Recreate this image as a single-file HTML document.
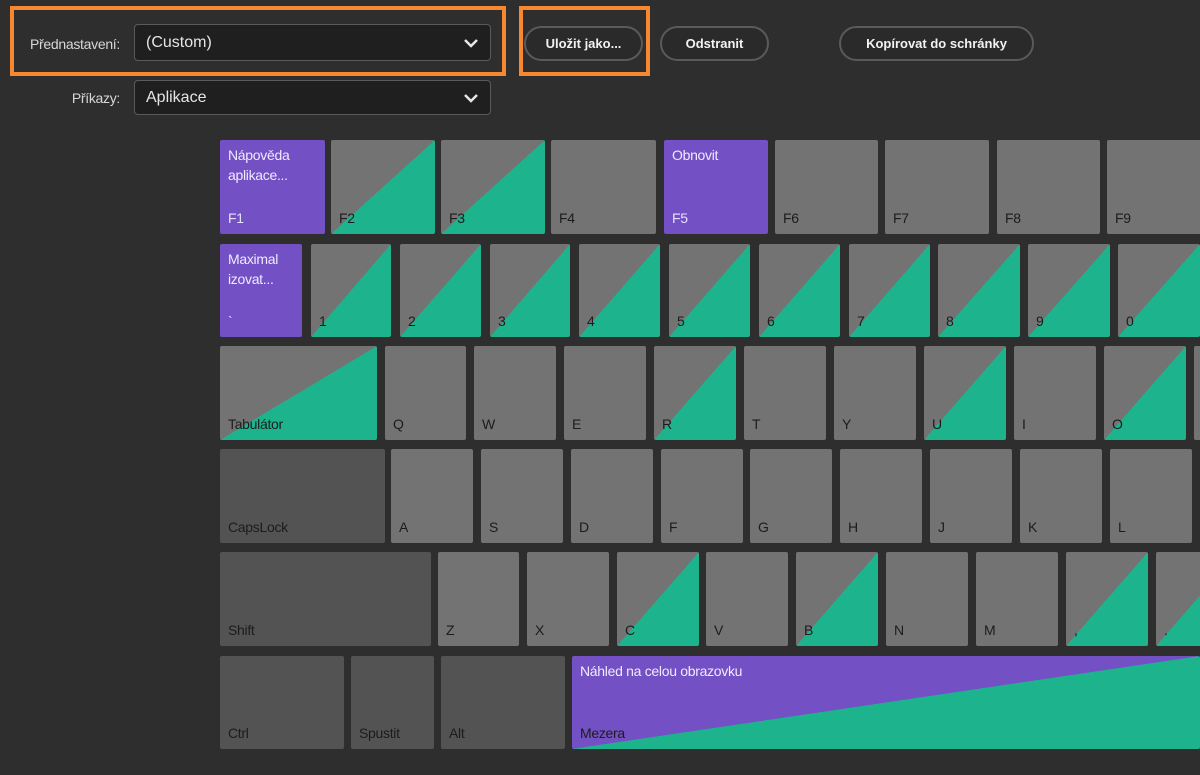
<!DOCTYPE html>
<html><head><meta charset="utf-8"><style>
body{margin:0;width:1200px;height:775px;background:#2e2e2e;overflow:hidden;position:relative;font-family:"Liberation Sans",sans-serif;}
.k{position:absolute;background:#737373;border-radius:2px;box-sizing:border-box;color:#1c1c1c;font-size:14px;letter-spacing:-0.3px;}
.k .b{position:absolute;left:8px;bottom:8px;}
.k .t{position:absolute;left:8px;top:5px;line-height:20px;color:#f0eaff;}
.s{background:linear-gradient(to bottom right,#737373 50%,#1db38d 50%);}
.p{background:#7350c4;}
.p .b{color:#e8e0ff}
.d{background:#535353;}
.or{position:absolute;border:4px solid #f7882f;box-sizing:border-box;}
.dd{position:absolute;left:134px;width:357px;background:#1f1f1f;border:1px solid #5a5a5a;border-radius:4px;box-sizing:border-box;color:#e6e6e6;font-size:16px;padding-left:11px;}
.lb{position:absolute;color:#d8d8d8;font-size:14px;text-align:right;width:120px;left:0;letter-spacing:-0.3px}
.bt{position:absolute;top:26px;height:35px;border:2px solid #5a5a5a;border-radius:18px;box-sizing:border-box;color:#f2f2f2;font-weight:bold;font-size:13px;text-align:center;line-height:31px;background:#2a2a2a;}
.chev{position:absolute;right:12px;top:50%;margin-top:-5px}
</style></head><body>
<div class="or" style="left:10px;top:6px;width:496px;height:70px"></div>
<div class="or" style="left:519px;top:6px;width:131px;height:70px"></div>
<div class="lb" style="top:36px">Přednastavení:</div>
<div class="dd" style="top:24px;height:37px;line-height:35px">(Custom)<svg class="chev" width="14" height="10"><path d="M1 2 L7 8 L13 2" stroke="#e6e6e6" stroke-width="2.5" fill="none"/></svg></div>
<div class="lb" style="top:90px">Příkazy:</div>
<div class="dd" style="top:80px;height:35px;line-height:33px">Aplikace<svg class="chev" width="14" height="10"><path d="M1 2 L7 8 L13 2" stroke="#e6e6e6" stroke-width="2.5" fill="none"/></svg></div>
<div class="bt" style="left:524px;width:119px">Uložit jako...</div>
<div class="bt" style="left:660px;width:109px">Odstranit</div>
<div class="bt" style="left:839px;width:195px">Kopírovat do schránky</div>

<div class="k p" style="left:220px;top:140px;width:105px;height:94px"><div class="t">Nápověda<br>aplikace...</div><div class="b">F1</div></div>
<div class="k s" style="left:331px;top:140px;width:104px;height:94px"><div class="b">F2</div></div>
<div class="k s" style="left:441px;top:140px;width:104px;height:94px"><div class="b">F3</div></div>
<div class="k" style="left:551px;top:140px;width:105px;height:94px"><div class="b">F4</div></div>
<div class="k p" style="left:664px;top:140px;width:104px;height:94px"><div class="t">Obnovit</div><div class="b">F5</div></div>
<div class="k" style="left:775px;top:140px;width:103px;height:94px"><div class="b">F6</div></div>
<div class="k" style="left:885px;top:140px;width:104px;height:94px"><div class="b">F7</div></div>
<div class="k" style="left:997px;top:140px;width:103px;height:94px"><div class="b">F8</div></div>
<div class="k" style="left:1107px;top:140px;width:110px;height:94px"><div class="b">F9</div></div>

<div class="k p" style="left:220px;top:244px;width:82px;height:93px"><div class="t">Maximal<br>izovat...</div><div class="b">`</div></div>
<div class="k s" style="left:311px;top:244px;width:80px;height:93px"><div class="b">1</div></div>
<div class="k s" style="left:400px;top:244px;width:81px;height:93px"><div class="b">2</div></div>
<div class="k s" style="left:490px;top:244px;width:80px;height:93px"><div class="b">3</div></div>
<div class="k s" style="left:579px;top:244px;width:81px;height:93px"><div class="b">4</div></div>
<div class="k s" style="left:669px;top:244px;width:81px;height:93px"><div class="b">5</div></div>
<div class="k s" style="left:759px;top:244px;width:81px;height:93px"><div class="b">6</div></div>
<div class="k s" style="left:849px;top:244px;width:81px;height:93px"><div class="b">7</div></div>
<div class="k s" style="left:938px;top:244px;width:82px;height:93px"><div class="b">8</div></div>
<div class="k s" style="left:1028px;top:244px;width:82px;height:93px"><div class="b">9</div></div>
<div class="k s" style="left:1118px;top:244px;width:82px;height:93px"><div class="b">0</div></div>

<div class="k s" style="left:220px;top:346px;width:157px;height:94px"><div class="b">Tabulátor</div></div>
<div class="k" style="left:385px;top:346px;width:81px;height:94px"><div class="b">Q</div></div>
<div class="k" style="left:474px;top:346px;width:82px;height:94px"><div class="b">W</div></div>
<div class="k" style="left:564px;top:346px;width:82px;height:94px"><div class="b">E</div></div>
<div class="k s" style="left:654px;top:346px;width:82px;height:94px"><div class="b">R</div></div>
<div class="k" style="left:744px;top:346px;width:82px;height:94px"><div class="b">T</div></div>
<div class="k" style="left:834px;top:346px;width:82px;height:94px"><div class="b">Y</div></div>
<div class="k s" style="left:924px;top:346px;width:82px;height:94px"><div class="b">U</div></div>
<div class="k" style="left:1014px;top:346px;width:82px;height:94px"><div class="b">I</div></div>
<div class="k s" style="left:1104px;top:346px;width:82px;height:94px"><div class="b">O</div></div>
<div class="k" style="left:1194px;top:346px;width:82px;height:94px"></div>

<div class="k d" style="left:220px;top:449px;width:165px;height:94px"><div class="b">CapsLock</div></div>
<div class="k" style="left:391px;top:449px;width:82px;height:94px"><div class="b">A</div></div>
<div class="k" style="left:481px;top:449px;width:82px;height:94px"><div class="b">S</div></div>
<div class="k" style="left:571px;top:449px;width:82px;height:94px"><div class="b">D</div></div>
<div class="k" style="left:661px;top:449px;width:82px;height:94px"><div class="b">F</div></div>
<div class="k" style="left:750px;top:449px;width:82px;height:94px"><div class="b">G</div></div>
<div class="k" style="left:840px;top:449px;width:82px;height:94px"><div class="b">H</div></div>
<div class="k" style="left:930px;top:449px;width:82px;height:94px"><div class="b">J</div></div>
<div class="k" style="left:1020px;top:449px;width:82px;height:94px"><div class="b">K</div></div>
<div class="k" style="left:1110px;top:449px;width:82px;height:94px"><div class="b">L</div></div>
<div class="k" style="left:1200px;top:449px;width:82px;height:94px"></div>

<div class="k d" style="left:220px;top:552px;width:211px;height:94px"><div class="b">Shift</div></div>
<div class="k" style="left:438px;top:552px;width:81px;height:94px"><div class="b">Z</div></div>
<div class="k" style="left:527px;top:552px;width:82px;height:94px"><div class="b">X</div></div>
<div class="k s" style="left:617px;top:552px;width:82px;height:94px"><div class="b">C</div></div>
<div class="k" style="left:706px;top:552px;width:82px;height:94px"><div class="b">V</div></div>
<div class="k s" style="left:796px;top:552px;width:82px;height:94px"><div class="b">B</div></div>
<div class="k" style="left:886px;top:552px;width:82px;height:94px"><div class="b">N</div></div>
<div class="k" style="left:976px;top:552px;width:82px;height:94px"><div class="b">M</div></div>
<div class="k s" style="left:1066px;top:552px;width:82px;height:94px"><div class="b">,</div></div>
<div class="k s" style="left:1156px;top:552px;width:82px;height:94px"><div class="b">.</div></div>

<div class="k d" style="left:220px;top:656px;width:124px;height:93px"><div class="b">Ctrl</div></div>
<div class="k d" style="left:351px;top:656px;width:83px;height:93px"><div class="b">Spustit</div></div>
<div class="k d" style="left:441px;top:656px;width:124px;height:93px"><div class="b">Alt</div></div>
<div class="k" style="left:572px;top:656px;width:628px;height:93px;background:linear-gradient(to bottom right,#7350c4 50%,#1db38d 50%)"><div class="t">Náhled na celou obrazovku</div><div class="b">Mezera</div></div>
</body></html>
